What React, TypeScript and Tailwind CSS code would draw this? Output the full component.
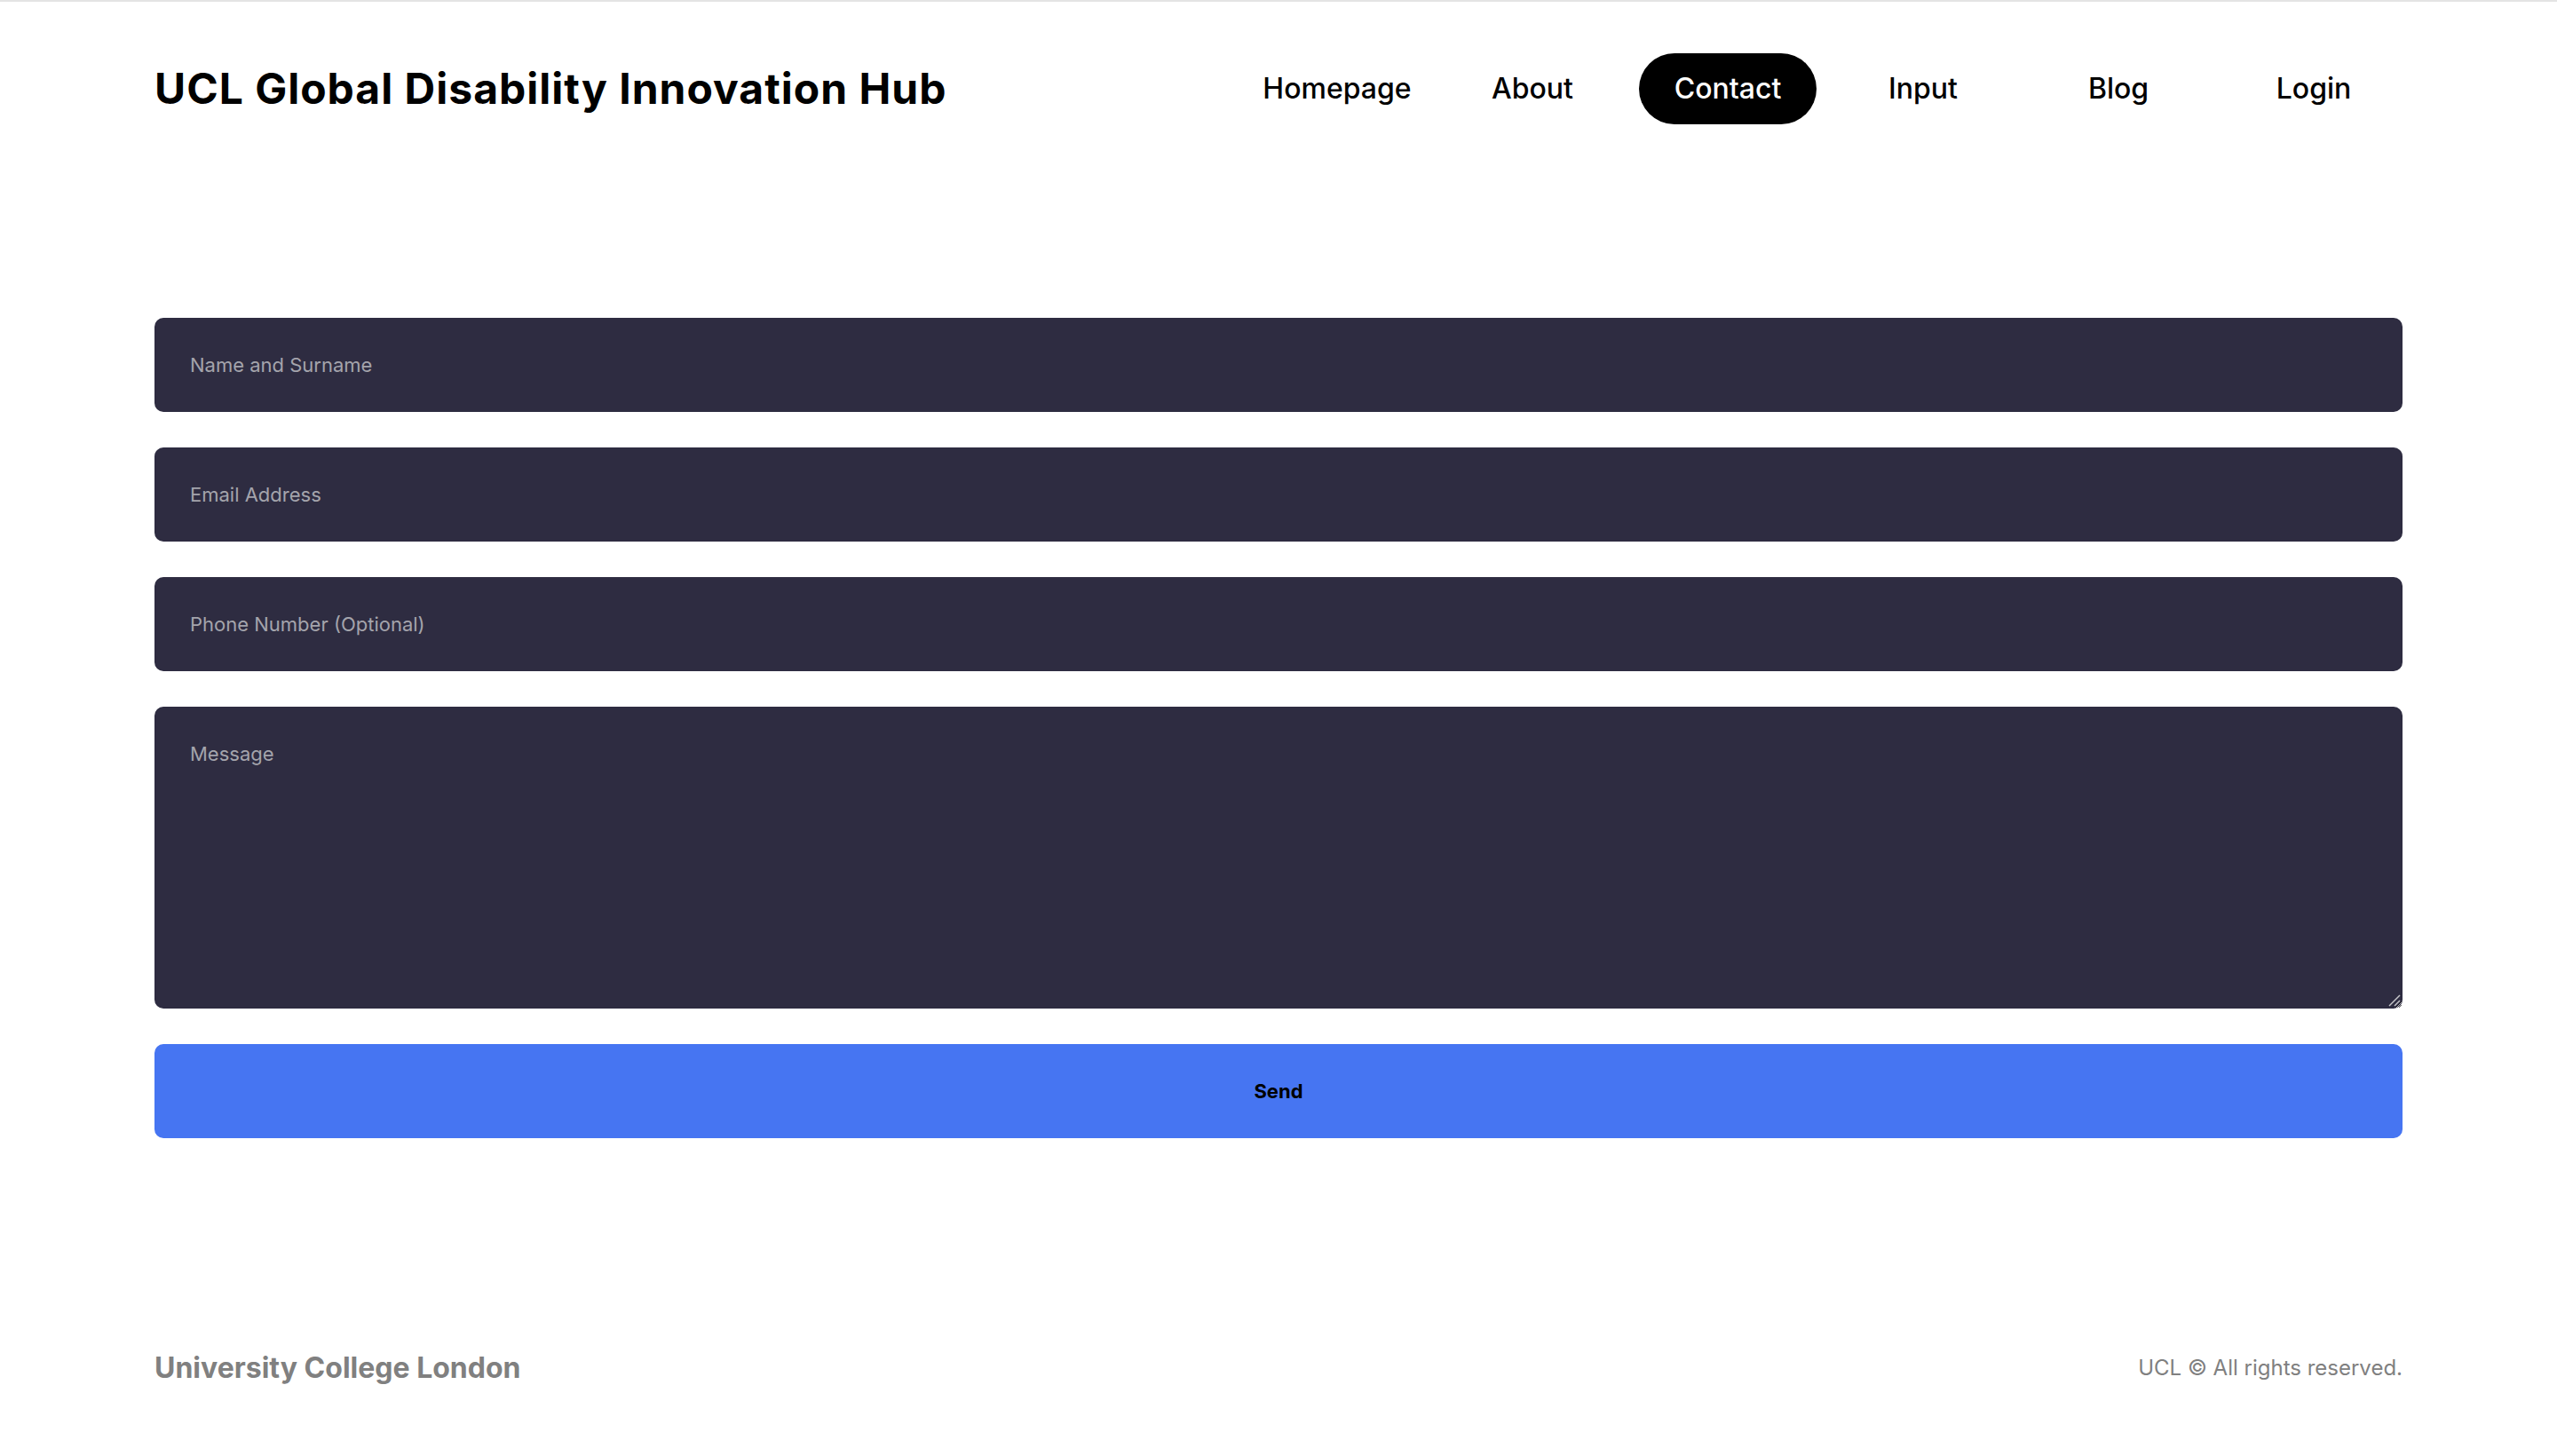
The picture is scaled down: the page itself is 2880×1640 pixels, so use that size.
import { useState } from "react";

const links = ["Homepage", "About", "Contact", "Input", "Blog", "Login"];

const field =
    "h-[106px] w-full rounded-[10px] bg-[#2e2c41] px-[40px] text-[22px] text-white placeholder:text-[#a4a4ac] outline-none";

export default function App() {
    const [active, setActive] = useState("Contact");

    return (
        <div
            className="min-h-screen bg-white border-t-2 border-[#e4e4e4] text-black"
            style={{ fontFamily: "Inter, 'Noto Sans', sans-serif" }}
        >
            <div className="px-[174px]">
                {/* Header */}
                <header className="flex items-center justify-between pt-[58px]">
                    <h1 className="text-[48px] font-bold leading-none tracking-[1px]">
                        UCL Global Disability Innovation Hub
                    </h1>
                    <nav className="flex items-center gap-[20px]">
                        {links.map((name) => (
                            <a
                                key={name}
                                href="#"
                                onClick={(e) => {
                                    e.preventDefault();
                                    setActive(name);
                                }}
                                className={`w-[200px] h-[80px] flex items-center justify-center rounded-full text-[32px] font-medium ${
                                    active === name ? "bg-black text-white" : "text-black"
                                }`}
                            >
                                {name}
                            </a>
                        ))}
                    </nav>
                </header>

                {/* Contact form */}
                <form
                    className="mt-[218px] flex flex-col gap-[40px]"
                    onSubmit={(e) => e.preventDefault()}
                >
                    <input type="text" placeholder="Name and Surname" className={field} />
                    <input type="email" placeholder="Email Address" className={field} />
                    <input type="tel" placeholder="Phone Number (Optional)" className={field} />
                    <div className="relative">
                        <textarea
                            placeholder="Message"
                            className="block h-[340px] w-full rounded-[10px] bg-[#2e2c41] px-[40px] pt-[38px] text-[22px] leading-[30px] text-white placeholder:text-[#a4a4ac] outline-none"
                        />
                        {/* resize grip */}
                        <svg
                            className="pointer-events-none absolute right-[2px] bottom-[2px]"
                            width="16"
                            height="16"
                            viewBox="0 0 16 16"
                        >
                            <line x1="15" y1="3" x2="3" y2="15" stroke="#c8c8cc" strokeWidth="1.5" />
                            <line x1="15" y1="9" x2="9" y2="15" stroke="#c8c8cc" strokeWidth="1.5" />
                        </svg>
                    </div>
                    <button
                        type="submit"
                        className="h-[106px] w-full rounded-[10px] bg-[#4675f2] text-[22px] font-bold text-black"
                    >
                        Send
                    </button>
                </form>

                {/* Footer */}
                <footer className="mt-[235px] flex items-center justify-between pb-[68px]">
                    <span className="text-[32px] font-bold leading-[48px] text-[#808080]">
                        University College London
                    </span>
                    <span className="text-[24px] leading-[48px] text-[#808080]">
                        UCL © All rights reserved.
                    </span>
                </footer>
            </div>
        </div>
    );
}
